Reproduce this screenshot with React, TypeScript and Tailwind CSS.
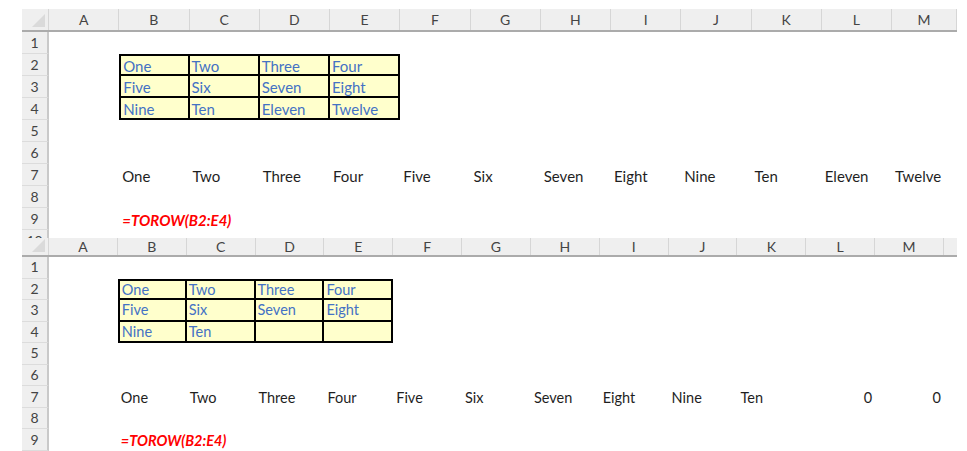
import type { JSX } from "react";

type Kind = "table" | "text" | "formula" | "num";
type CellDef = { v?: string; k: Kind };
type RowData = Record<number, CellDef>;

const LETTERS = ["A", "B", "C", "D", "E", "F", "G", "H", "I", "J", "K", "L", "M"];

function t(v: string): CellDef {
    return { v, k: "table" };
}

function tableClass(row: number, col: number): string {
    let c = "bg-[#ffffcc] border-black border-r-2 border-b-2";
    if (col === 1) c += " border-l-2";
    if (row === 2) c += " border-t-2";
    return c;
}

function Cell({ cell, row, col }: { cell?: CellDef; row: number; col: number }): JSX.Element {
    if (!cell) return <div />;
    if (cell.k === "table") {
        return (
            <div className={`flex items-center min-h-0 pl-[2px] pt-[1px] leading-[16px] text-[#4472c4] whitespace-nowrap ${tableClass(row, col)}`}>
                {cell.v}
            </div>
        );
    }
    if (cell.k === "formula") {
        return (
            <div className="flex items-center min-h-0 pl-[3px] pt-[2px] leading-[16px] font-bold italic text-[#ff0000] whitespace-nowrap">
                {cell.v}
            </div>
        );
    }
    if (cell.k === "num") {
        return <div className="flex items-center justify-end min-h-0 pr-[3px] pt-[2px] leading-[16px] text-[#1f1f1f]">{cell.v}</div>;
    }
    return <div className="flex items-center min-h-0 pl-[3px] pt-[2px] leading-[16px] text-[#1f1f1f] whitespace-nowrap">{cell.v}</div>;
}

function Corner(): JSX.Element {
    return (
        <div className="relative border-r border-[#d6d6d6]">
            <svg className="absolute right-[3px] bottom-[3px]" width="13" height="13" viewBox="0 0 13 13">
                <polygon points="13,0 13,13 0,13" fill="#dadada" />
            </svg>
        </div>
    );
}

function Sheet({
    grid,
    headerClass,
    rowClass,
    textClass,
    data,
    extraCol,
    partialRow,
}: {
    grid: string;
    headerClass: string;
    rowClass: string;
    textClass: string;
    data: Record<number, RowData>;
    extraCol: boolean;
    partialRow: boolean;
}): JSX.Element {
    const rows = [1, 2, 3, 4, 5, 6, 7, 8, 9];
    return (
        <div className={`ml-[22px] w-[935px] ${textClass}`}>
            <div className={`${grid} ${headerClass} bg-[#efefef] border-b-2 border-[#ababab] text-[#444] text-[14px] leading-[16px]`}>
                <Corner />
                {LETTERS.map((l) => (
                    <div key={l} className="flex items-center justify-center border-r border-[#d6d6d6]">
                        {l}
                    </div>
                ))}
                {extraCol && <div />}
            </div>
            {rows.map((r) => (
                <div key={r} className={`${grid} ${rowClass}`}>
                    <div className="flex items-center justify-center min-h-0 bg-[#efefef] border-r-2 border-b border-r-[#c9c9c9] border-b-[#dcdcdc] text-[#444] text-[14px] leading-[16px]">
                        {r}
                    </div>
                    {LETTERS.map((l, i) => (
                        <Cell key={l} cell={data[r]?.[i]} row={r} col={i} />
                    ))}
                    {extraCol && <div />}
                </div>
            ))}
            {partialRow && (
                <div className="h-[8px] overflow-hidden">
                    <div className={`${grid} h-[22px]`}>
                        <div className="flex items-center justify-center bg-[#efefef] border-r-2 border-r-[#c9c9c9] text-[#444] text-[14px] leading-[16px]">
                            10
                        </div>
                    </div>
                </div>
            )}
        </div>
    );
}

const topData: Record<number, RowData> = {
    2: { 1: t("One"), 2: t("Two"), 3: t("Three"), 4: t("Four") },
    3: { 1: t("Five"), 2: t("Six"), 3: t("Seven"), 4: t("Eight") },
    4: { 1: t("Nine"), 2: t("Ten"), 3: t("Eleven"), 4: t("Twelve") },
    7: {
        1: { v: "One", k: "text" },
        2: { v: "Two", k: "text" },
        3: { v: "Three", k: "text" },
        4: { v: "Four", k: "text" },
        5: { v: "Five", k: "text" },
        6: { v: "Six", k: "text" },
        7: { v: "Seven", k: "text" },
        8: { v: "Eight", k: "text" },
        9: { v: "Nine", k: "text" },
        10: { v: "Ten", k: "text" },
        11: { v: "Eleven", k: "text" },
        12: { v: "Twelve", k: "text" },
    },
    9: { 1: { v: "=TOROW(B2:E4)", k: "formula" } },
};

const bottomData: Record<number, RowData> = {
    2: { 1: t("One"), 2: t("Two"), 3: t("Three"), 4: t("Four") },
    3: { 1: t("Five"), 2: t("Six"), 3: t("Seven"), 4: t("Eight") },
    4: { 1: t("Nine"), 2: t("Ten"), 3: t(""), 4: t("") },
    7: {
        1: { v: "One", k: "text" },
        2: { v: "Two", k: "text" },
        3: { v: "Three", k: "text" },
        4: { v: "Four", k: "text" },
        5: { v: "Five", k: "text" },
        6: { v: "Six", k: "text" },
        7: { v: "Seven", k: "text" },
        8: { v: "Eight", k: "text" },
        9: { v: "Nine", k: "text" },
        10: { v: "Ten", k: "text" },
        11: { v: "0", k: "num" },
        12: { v: "0", k: "num" },
    },
    9: { 1: { v: "=TOROW(B2:E4)", k: "formula" } },
};

export default function App(): JSX.Element {
    return (
        <div className="w-[967px] h-[451px] overflow-hidden bg-white font-['Lato','Liberation_Sans',sans-serif] pt-[9px]">
            <Sheet
                grid="grid grid-cols-[27px_repeat(12,70.25px)_65px] grid-rows-[minmax(0,1fr)]"
                headerClass="h-[23px]"
                rowClass="h-[22px]"
                textClass="text-[15px]"
                data={topData}
                extraCol={false}
                partialRow={true}
            />
            <Sheet
                grid="grid grid-cols-[27px_repeat(13,68.85px)_13px] grid-rows-[minmax(0,1fr)]"
                headerClass="h-[19px]"
                rowClass="h-[21.55px]"
                textClass="text-[14.5px]"
                data={bottomData}
                extraCol={true}
                partialRow={false}
            />
        </div>
    );
}
